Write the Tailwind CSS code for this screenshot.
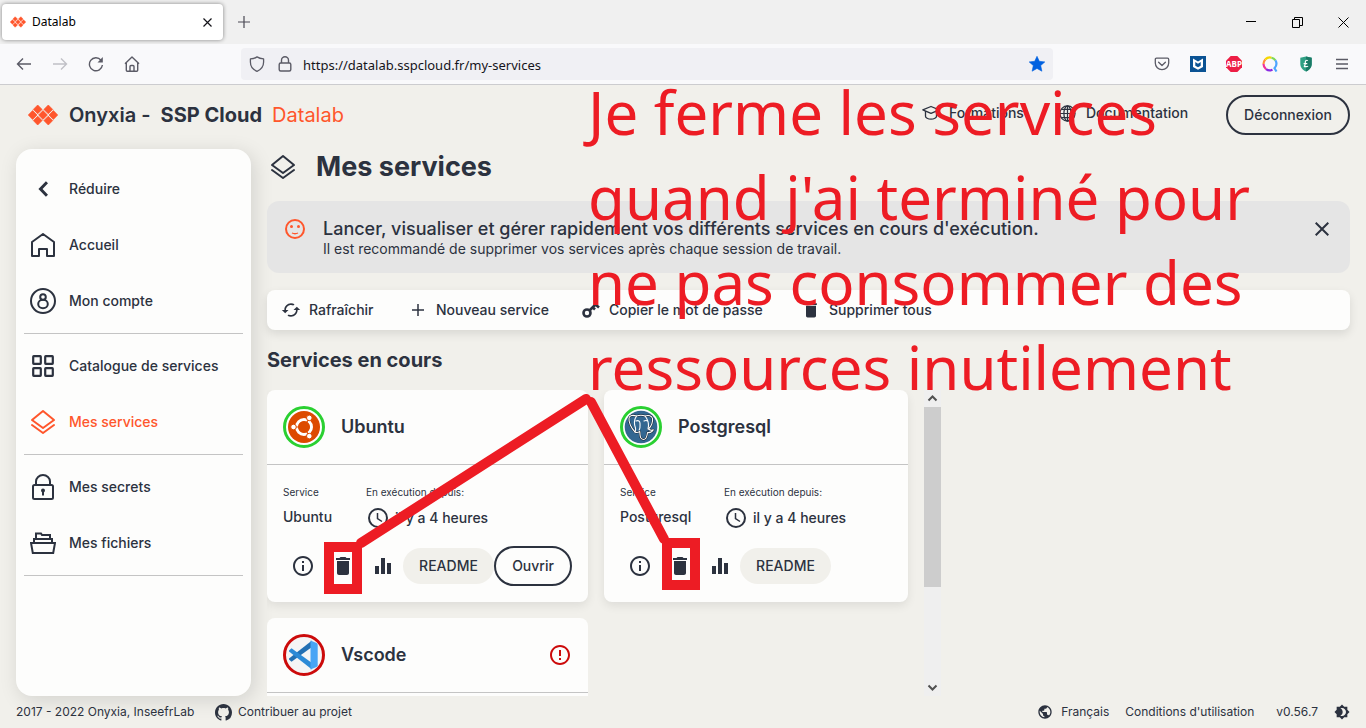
<!DOCTYPE html>
<html lang="fr">
<head>
<meta charset="utf-8">
<title>Datalab</title>
<script src="https://cdn.jsdelivr.net/npm/@tailwindcss/browser@4"></script>
</head>
<body class="relative flex h-screen flex-col overflow-hidden bg-[#f1f0eb] font-['Inter','Liberation_Sans',sans-serif] text-sm text-[#2c323f]">

<svg class="hidden" aria-hidden="true">
  <symbol id="onyxia" viewBox="0 0 30 20"><g fill="#ff562c" stroke="#ff562c" stroke-width="0.7" stroke-linejoin="round"><path d="M9.700 0l4.400 4.400-4.400 4.400-4.400-4.400zM20.300 0l4.400 4.400-4.400 4.400-4.400-4.400zM4.600 5.600L9 10l-4.400 4.400L.3 10zM15 5.600l4.400 4.400-4.400 4.400-4.400-4.400zM25.400 5.600l4.300 4.400-4.300 4.400L21 10zM9.700 11.200l4.400 4.400L9.700 20l-4.400-4.400zM20.300 11.200l4.400 4.400-4.400 4.400-4.400-4.400z"/></g></symbol>
  <symbol id="layers" viewBox="0 0 26 26"><g fill="none" stroke="currentColor" stroke-width="2" stroke-linejoin="round" stroke-linecap="round"><path d="M13 2l11 9-11 8L2 11z"/><path d="M2 16l11 8 11-8"/></g></symbol>
  <symbol id="info" viewBox="0 0 24 24"><path fill="currentColor" d="M11 7h2v2h-2zm0 4h2v6h-2zm1-9C6.480 2 2 6.480 2 12s4.480 10 10 10 10-4.480 10-10S17.520 2 12 2zm0 18c-4.410 0-8-3.590-8-8s3.590-8 8-8 8 3.590 8 8-3.590 8-8 8z"/></symbol>
  <symbol id="error" viewBox="0 0 24 24"><path fill="currentColor" d="M11 15h2v2h-2zm0-8h2v6h-2zm1-5C6.480 2 2 6.480 2 12s4.480 10 10 10 10-4.480 10-10S17.520 2 12 2zm0 18c-4.410 0-8-3.590-8-8s3.590-8 8-8 8 3.590 8 8-3.590 8-8 8z"/></symbol>
  <symbol id="trash" viewBox="0 0 24 24"><path fill="currentColor" d="M6 19c0 1.100.9 2 2 2h8c1.100 0 2-.9 2-2V7H6v12zM19 4h-3.500l-1-1h-5l-1 1H5v2h14V4z"/></symbol>
  <symbol id="chart" viewBox="0 0 24 24"><path fill="currentColor" d="M10 20h4V4h-4v16zm-6 0h4v-8H4v8zM16 9v11h4V9h-4z"/></symbol>
  <symbol id="clock" viewBox="0 0 24 24"><g fill="none" stroke="currentColor" stroke-width="2"><circle cx="12" cy="12" r="9"/><path d="M11.500 7v5.500l4.500 3" stroke-width="1.500"/></g></symbol>
</svg>

<!-- Browser tab strip -->
<div class="flex h-11 shrink-0 items-center bg-[#f0f0f0] font-['Noto_Sans',sans-serif] text-xs text-black">
  <div class="ml-[2px] flex h-9 w-[221px] items-center rounded bg-white pr-2 pl-2 shadow-[0_0_4px_rgba(0,0,0,0.45)]">
    <svg class="h-4 w-4"><use href="#onyxia"/></svg>
    <span class="ml-[6px] flex-1">Datalab</span>
    <button aria-label="Fermer l'onglet" class="grid h-4 w-4 place-items-center"><svg class="h-[9px] w-[9px]" viewBox="0 0 9 9" stroke="#15141a" stroke-width="1.200"><path d="M.5.5l8 8M8.500.5l-8 8"/></svg></button>
  </div>
  <button aria-label="Nouvel onglet" class="ml-[13px] grid h-4 w-4 place-items-center"><svg class="h-3 w-3" viewBox="0 0 12 12" stroke="#4a4954" stroke-width="1.200"><path d="M6 0v12M0 6h12"/></svg></button>
  <div class="ml-auto flex">
    <button aria-label="Réduire" class="grid h-8 w-[46px] place-items-center"><svg class="h-[10px] w-[10px]" viewBox="0 0 10 10" stroke="#000"><path d="M0 4.500h10"/></svg></button>
    <button aria-label="Restaurer" class="grid h-8 w-[46px] place-items-center"><svg class="h-[11px] w-[11px]" viewBox="0 0 11 11" fill="none" stroke="#000"><path d="M.5 2.500h7v8h-7zM2.500 2.500v-2h8v8h-3"/></svg></button>
    <button aria-label="Fermer" class="grid h-8 w-[46px] place-items-center"><svg class="h-[11px] w-[11px]" viewBox="0 0 11 11" stroke="#000"><path d="M.5.5l10 10M10.500.5l-10 10"/></svg></button>
  </div>
</div>

<!-- Browser toolbar -->
<div class="flex h-[41px] shrink-0 items-center border-b border-[#cccccf] bg-[#f9f9fb] px-2 font-['Noto_Sans',sans-serif] text-[13px] text-[#15141a]">
  <div class="flex gap-1 text-[#5b5b66]">
    <button aria-label="Précédent" class="grid h-8 w-8 place-items-center"><svg class="h-4 w-4" viewBox="0 0 16 16" fill="none" stroke="currentColor" stroke-width="1.400"><path d="M15 8H1.500M7 2.500L1.500 8 7 13.500"/></svg></button>
    <button aria-label="Suivant" class="grid h-8 w-8 place-items-center text-[#c0c0c6]"><svg class="h-4 w-4" viewBox="0 0 16 16" fill="none" stroke="currentColor" stroke-width="1.400"><path d="M1 8h13.500M9 2.500L14.500 8 9 13.500"/></svg></button>
    <button aria-label="Actualiser" class="grid h-8 w-8 place-items-center"><svg class="h-4 w-4" viewBox="0 0 16 16" fill="none" stroke="currentColor" stroke-width="1.400"><path d="M13 4.200A6.500 6.500 0 1 0 14.400 9"/><path d="M14.800 1v5.500H9.500z" fill="currentColor" stroke="none"/></svg></button>
    <button aria-label="Accueil" class="grid h-8 w-8 place-items-center"><svg class="h-4 w-4" viewBox="0 0 16 16" fill="none" stroke="currentColor" stroke-width="1.400" stroke-linejoin="round"><path d="M1 7.800L8 1l7 6.800M2.300 7v7.200c0 .6.400 1 1 1h9.400c.6 0 1-.4 1-1V7M6 15v-4.500c0-.6.400-1 1-1h2c.6 0 1 .4 1 1V15"/></svg></button>
  </div>
  <div class="mx-[93px] flex h-8 flex-1 items-center rounded bg-[#f0f0f4] px-2 text-[#5b5b66]">
    <svg class="h-4 w-4" viewBox="0 0 16 16" fill="none" stroke="currentColor" stroke-width="1.300" stroke-linejoin="round"><path d="M8 .9c2 1.400 4.200 1.900 6.600 2v3.200c0 4.300-2.600 7.600-6.600 9.200-4-1.600-6.600-4.900-6.600-9.200V2.900C3.800 2.800 6 2.300 8 .9z"/></svg>
    <svg class="ml-3 h-4 w-4" viewBox="0 0 16 16" fill="none" stroke="currentColor" stroke-width="1.400"><rect x="2.200" y="7" width="11.600" height="8" rx="1.500"/><path d="M4.500 7V4.300a3.500 3.500 0 0 1 7 0V7"/></svg>
    <input aria-label="Adresse" class="ml-[10px] min-w-0 flex-1 bg-transparent pt-[2px] text-[#15141a] outline-none" value="https://datalab.sspcloud.fr/my-services">
    <button aria-label="Marque-page"><svg class="h-4 w-4" viewBox="0 0 16 16" fill="#0061e0"><path d="M8 .3l2.300 5 5.500.6-4.100 3.700 1.200 5.600L8 12.400l-4.900 2.800 1.200-5.600L.2 5.900l5.500-.6z" stroke="#0061e0" stroke-width=".6" stroke-linejoin="round"/></svg></button>
  </div>
  <div class="flex gap-1 text-[#5b5b66]">
    <button aria-label="Pocket" class="grid h-8 w-8 place-items-center"><svg class="h-4 w-4" viewBox="0 0 16 16" fill="none" stroke="currentColor" stroke-width="1.300"><path d="M2.500 2.200h11c.7 0 1.200.5 1.200 1.200V7A6.700 6.700 0 0 1 1.300 7V3.400c0-.7.500-1.200 1.200-1.200z"/><path d="M4.600 6.300L8 9.500l3.400-3.200" stroke-linecap="round" stroke-linejoin="round"/></svg></button>
    <button aria-label="McAfee" class="grid h-8 w-8 place-items-center"><svg class="h-4 w-4" viewBox="0 0 16 16"><path fill="#0b5394" d="M0 0h16v16H0z"/><path fill="#fff" d="M3 2.500l5 3 5-3V11l-5 2.800L3 11z"/><path fill="#0b5394" d="M5.300 6l2.700 1.700L10.700 6v3.700L8 11.300 5.300 9.700z"/></svg></button>
    <button aria-label="Adblock Plus" class="grid h-8 w-8 place-items-center"><svg class="h-4 w-4" viewBox="0 0 16 16"><path fill="#ed1e45" d="M4.700 0h6.600L16 4.700v6.600L11.300 16H4.700L0 11.300V4.700z"/><text x="8" y="11" text-anchor="middle" font-family="Open Sans" font-weight="700" font-size="8" fill="#fff">ABP</text></svg></button>
    <button aria-label="Qwant" class="grid h-8 w-8 place-items-center"><svg class="h-4 w-4" viewBox="0 0 16 16" fill="none" stroke-width="2.200"><path d="M1.500 8a6.500 6.500 0 0 1 1.800-4.600" stroke="#ff8a3d"/><path d="M3.300 3.400a6.500 6.500 0 0 1 6.200-1.700" stroke="#f5d800"/><path d="M9.500 1.700a6.500 6.500 0 0 1 3.900 2.600" stroke="#7ed957"/><path d="M13.400 4.300c1.500 2.500 1.300 5.500-.9 7.900l2 3.300" stroke="#4da6ff"/><path d="M10.500 13.800a6.500 6.500 0 0 1-6.500-.7" stroke="#8a2be2"/><path d="M4 13.100A6.500 6.500 0 0 1 1.500 8" stroke="#f0309b"/></svg></button>
    <button aria-label="Protection" class="grid h-8 w-8 place-items-center"><svg class="h-4 w-4" viewBox="0 0 16 16"><path fill="#2fa084" d="M8 .6l5.700 1.200V8c0 3.600-2.500 6-5.700 7.500C4.800 14 2.300 11.600 2.300 8V1.800z"/><path fill="#1b7a66" d="M8 .6l5.700 1.200V8c0 3.600-2.500 6-5.700 7.500z"/><path d="M9.800 4.700C8.800 3.700 7.400 4.500 7.300 6c0 2 .2 3.500-1.300 4.700 1.500-.4 2.600.6 4.100-.6M5.600 7.700h3.700" fill="none" stroke="#fff" stroke-width="1.200"/></svg></button>
    <button aria-label="Menu" class="grid h-8 w-8 place-items-center"><svg class="h-4 w-4" viewBox="0 0 16 16" stroke="currentColor" stroke-width="1.300"><path d="M2 3.500h12M2 8h12M2 12.500h12"/></svg></button>
  </div>
</div>

<!-- Application header -->
<header class="mb-1 flex h-[60px] shrink-0 items-center px-4">
  <a href="#" class="flex items-center text-xl">
    <svg class="mr-[11px] ml-3 h-5 w-[30px] overflow-visible"><use href="#onyxia"/></svg>
    <span class="font-semibold">Onyxia - &nbsp;<b class="font-bold">SSP Cloud</b>&nbsp; <span class="font-normal text-[#ff562c]">Datalab</span></span>
  </a>
  <nav class="ml-auto flex items-center font-medium">
    <a href="#" class="mb-1 flex items-center gap-[9px]"><svg class="h-[18px] w-[18px]" viewBox="0 0 18 18" fill="none" stroke="currentColor" stroke-width="1.300" stroke-linejoin="round"><path d="M9 2.500l8.200 3.300L9 9.300.8 5.800z"/><path d="M3.500 7v5.200c0 1.500 2.500 3 5.500 3s5.500-1.500 5.500-3V7M17 6v5"/></svg><span class="min-w-[78px]">Formations</span></a>
    <a href="#" class="mb-1 ml-8 flex items-center gap-[10px]"><svg class="h-[17px] w-[17px]" viewBox="0 0 18 18" fill="none" stroke="currentColor" stroke-width="1.300"><circle cx="9" cy="9" r="8"/><ellipse cx="9" cy="9" rx="3.800" ry="8"/><path d="M1 9h16M2.500 4.700h13M2.500 13.300h13M9 1v16"/></svg><span class="min-w-[106px]">Documentation</span></a>
    <button class="ml-[34px] h-10 w-[124px] rounded-full border-2 border-[#2c323f]">Déconnexion</button>
  </nav>
</header>

<div class="flex min-h-0 flex-1 gap-4 px-4">
  <!-- Sidebar -->
  <nav class="w-[235px] shrink-0 rounded-2xl bg-[#fdfdfc] pt-3 font-medium shadow-[3px_4px_20px_rgba(0,0,0,0.13)]">
    <a href="#" class="flex h-14 items-center"><span class="grid w-[53px] place-items-center"><svg class="h-4 w-[10px]" viewBox="0 0 10 16" fill="none" stroke="currentColor" stroke-width="3"><path d="M9 1.200L2.500 8 9 14.800"/></svg></span>Réduire</a>
    <a href="#" class="flex h-14 items-center"><span class="grid w-[53px] place-items-center"><svg class="h-6 w-6" viewBox="0 0 24 24" fill="none" stroke="currentColor" stroke-width="2" stroke-linejoin="round"><path d="M1 23V9l11-8 11 8v14h-7v-7H8v7z"/></svg></span>Accueil</a>
    <a href="#" class="flex h-14 items-center"><span class="grid w-[53px] place-items-center"><svg class="h-[26px] w-[26px]" viewBox="0 0 26 26" fill="none" stroke="currentColor" stroke-width="2"><circle cx="13" cy="13" r="12"/><ellipse cx="13" cy="16" rx="4.800" ry="4.200"/><circle cx="13" cy="9" r="2.800" fill="#fdfdfc"/></svg></span>Mon compte</a>
    <hr class="mx-2 my-1 border-[#c4c4c4]">
    <a href="#" class="flex h-14 items-center"><span class="grid w-[53px] place-items-center"><svg class="h-[22px] w-[22px]" viewBox="0 0 22 22" fill="none" stroke="currentColor" stroke-width="2.200"><rect x="1.200" y="1.200" width="7.600" height="7.600" rx="0.500"/><rect x="13.200" y="1.200" width="7.600" height="7.600" rx="0.500"/><rect x="1.200" y="13.200" width="7.600" height="7.600" rx="0.500"/><rect x="13.200" y="13.200" width="7.600" height="7.600" rx="0.500"/></svg></span>Catalogue de services</a>
    <a href="#" aria-current="page" class="flex h-14 items-center text-[#ff562c]"><span class="grid w-[53px] place-items-center"><svg class="h-[26px] w-[26px]"><use href="#layers"/></svg></span>Mes services</a>
    <hr class="mx-2 my-1 border-[#c4c4c4]">
    <a href="#" class="flex h-14 items-center"><span class="grid w-[53px] place-items-center"><svg class="h-[26px] w-[22px]" viewBox="0 0 22 26" fill="none" stroke="currentColor" stroke-width="2"><rect x="1" y="11" width="20" height="14" rx="1.500"/><path d="M4 11V7.500a7 6.500 0 0 1 14 0V11"/><circle cx="11" cy="16.500" r="2" fill="currentColor" stroke="none"/><path d="M11 17v4.500"/></svg></span>Mes secrets</a>
    <a href="#" class="flex h-14 items-center"><span class="grid w-[53px] place-items-center"><svg class="h-[22px] w-[26px]" viewBox="0 0 26 22" fill="none" stroke="currentColor" stroke-width="2"><path d="M1 11h24l-1.800 10H2.800zM4 11V7h18v4M6 7V1.500h5l1 1.500h8v4"/></svg></span>Mes fichiers</a>
    <hr class="mx-2 my-1 border-[#c4c4c4]">
  </nav>

  <main class="flex min-w-0 flex-1 flex-col">
    <h1 class="flex h-9 shrink-0 items-center text-[27px] font-bold"><svg class="mr-5 ml-[3px] h-[26px] w-[26px]"><use href="#layers"/></svg>Mes services</h1>

    <section class="mt-4 flex shrink-0 items-start rounded-xl bg-[#e5e5e5] p-4">
      <svg class="h-6 w-6 shrink-0 text-[#ff562c]" viewBox="0 0 24 24" fill="none" stroke="currentColor" stroke-width="2"><circle cx="12" cy="12" r="9"/><circle cx="8.500" cy="9.500" r="1.500" fill="currentColor" stroke="none"/><circle cx="15.500" cy="9.500" r="1.500" fill="currentColor" stroke="none"/><path d="M9 16c2 1 4 1 6 0" stroke-width="1.300"/></svg>
      <div class="ml-4 flex-1">
        <h2 class="text-lg leading-6 font-medium">Lancer, visualiser et gérer rapidement vos différents services en cours d'exécution.</h2>
        <p class="leading-4">Il est recommandé de supprimer vos services après chaque session de travail.</p>
      </div>
      <button aria-label="Fermer" class="grid h-6 w-6 place-items-center"><svg class="h-[14px] w-[14px]" viewBox="0 0 14 14" stroke="currentColor" stroke-width="2"><path d="M.7.7l12.600 12.600M13.300.7L.7 13.300"/></svg></button>
    </section>

    <div class="mt-[17px] flex h-10 shrink-0 items-center gap-8 rounded-lg bg-[#fdfdfc] px-[14px] font-medium shadow-[0_4px_10px_rgba(0,0,0,0.1)]">
      <button class="flex items-center gap-2"><svg class="h-5 w-5" viewBox="0 0 24 24" fill="currentColor"><path d="M19 8l-4 4h3c0 3.310-2.690 6-6 6-1.010 0-1.970-.25-2.800-.7l-1.460 1.460C8.970 19.540 10.430 20 12 20c4.420 0 8-3.580 8-8h3l-4-4zM6 12c0-3.310 2.690-6 6-6 1.010 0 1.970.25 2.800.7l1.460-1.460C15.030 4.460 13.570 4 12 4c-4.420 0-8 3.580-8 8H1l4 4 4-4H6z"/></svg><span class="min-w-[67px] text-left">Rafraîchir</span></button>
      <button class="flex items-center gap-2"><svg class="h-5 w-5" viewBox="0 0 20 20" stroke="currentColor" stroke-width="1.500"><path d="M10 4v12M4 10h12"/></svg>Nouveau service</button>
      <button class="flex items-center gap-2"><svg class="h-5 w-5" viewBox="0 0 20 20" fill="none" stroke="currentColor" stroke-width="2.600"><circle cx="6" cy="13" r="3.500"/><path d="M8.500 10.500l6-6 3.500 3M12 7.500l2 2"/></svg><span class="min-w-40 text-left">Copier le mot de passe</span></button>
      <button class="flex items-center gap-2"><svg class="h-5 w-5"><use href="#trash"/></svg>Supprimer tous</button>
    </div>

    <h2 class="flex h-[60px] shrink-0 items-center text-xl font-bold">Services en cours</h2>

    <div class="flex min-h-0 max-w-[674px] flex-1 overflow-hidden">
      <div class="grid flex-1 grid-cols-[321fr_304fr] content-start items-start gap-4">
        <article class="rounded-lg bg-[#fdfdfc] shadow-[0_4px_10px_rgba(0,0,0,0.08)]">
          <header class="flex items-center gap-4 border-b border-[#c4c4c4] p-4">
            <svg class="h-[42px] w-[42px]" viewBox="0 0 42 42"><circle cx="21" cy="21" r="19.500" fill="#fff" stroke="#2ad031" stroke-width="3"/><circle cx="21" cy="21" r="16" fill="#dd4a00"/><g fill="none" stroke="#fff" stroke-width="3"><circle cx="21" cy="21" r="7.500"/></g><g stroke="#dd4a00" stroke-width="1.200"><path d="M21 21H9M21 21l6-10.400M21 21l6 10.400"/></g><circle cx="21" cy="21" r="5.700" fill="#dd4a00"/><g fill="#fff" stroke="#dd4a00" stroke-width="1"><circle cx="10.500" cy="21" r="2.800"/><circle cx="26.300" cy="11.900" r="2.800"/><circle cx="26.300" cy="30.100" r="2.800"/></g></svg>
            <h3 class="text-lg font-semibold">Ubuntu</h3>
          </header>
          <div class="p-4">
            <div class="flex gap-8">
              <div class="min-w-[51px]"><p class="text-[10px] leading-[22px]">Service</p><p class="mt-[3px] leading-[22px] font-medium">Ubuntu</p></div>
              <div><p class="text-[10px] leading-[22px]">En exécution depuis:</p><p class="mt-[3px] flex h-6 items-center gap-[5px] font-medium"><svg class="h-6 w-6"><use href="#clock"/></svg>il y a 4 heures</p></div>
            </div>
            <div class="mt-4 flex items-center">
              <button aria-label="Informations" class="grid h-10 w-10 place-items-center"><svg class="h-6 w-6"><use href="#info"/></svg></button>
              <button aria-label="Supprimer" class="grid h-10 w-10 place-items-center"><svg class="h-6 w-6"><use href="#trash"/></svg></button>
              <button aria-label="Surveillance" class="grid h-10 w-10 place-items-center"><svg class="h-6 w-6"><use href="#chart"/></svg></button>
              <button class="h-9 w-[91px] rounded-full bg-[#f1f0eb] font-medium">README</button>
              <button class="h-10 w-[78px] rounded-full border-2 border-[#2c323f] font-medium">Ouvrir</button>
            </div>
          </div>
        </article>

        <article class="rounded-lg bg-[#fdfdfc] shadow-[0_4px_10px_rgba(0,0,0,0.08)]">
          <header class="flex items-center gap-4 border-b border-[#c4c4c4] p-4">
            <svg class="h-[42px] w-[42px]" viewBox="0 0 42 42"><circle cx="21" cy="21" r="19.500" fill="#fff" stroke="#2ad031" stroke-width="3"/><circle cx="21" cy="21" r="16.300" fill="#336791"/><g fill="#336791" stroke="#111c28" stroke-width="2" stroke-linejoin="round" stroke-linecap="round"><path d="M15 26c-4-4-6.500-10-6-14 .5-2.500 4-3.300 7.500-2 3-1 6-1 8.500 0 3.500-1.300 7-.2 7.500 2.500.4 3.500-1.500 8-4 10.500 1.500 1.500 3.500 1.300 4.800.8-1 2.200-3.500 3-5.800 2.700-.5 3-.5 7-4 7-3.200 0-3.500-3-3.700-8-1.300.8-3 1.500-4.800.5z"/></g><g fill="none" stroke="#fff" stroke-width="1.100" stroke-linejoin="round" stroke-linecap="round"><path d="M15 26c-4-4-6.500-10-6-14 .5-2.500 4-3.300 7.500-2 3-1 6-1 8.500 0 3.500-1.300 7-.2 7.500 2.500.4 3.500-1.500 8-4 10.500 1.500 1.500 3.500 1.300 4.800.8-1 2.200-3.500 3-5.800 2.700-.5 3-.5 7-4 7-3.200 0-3.500-3-3.700-8-1.300.8-3 1.500-4.800.5z"/><path d="M16.500 10c-2 3-2.500 8-1 12 .5 1.500 0 2.500-.5 4M25 10c2.500 3 3.500 6 3.500 9.500 0 1.500-.5 2.500-.5 3.500M16 15c2.500-1 4 0 4 2.500s.5 4-.8 6.500M24 15c1.500-.7 3-.5 4 .3"/></g></svg>
            <h3 class="text-lg font-semibold">Postgresql</h3>
          </header>
          <div class="p-4">
            <div class="flex gap-8">
              <div class="min-w-[72px]"><p class="text-[10px] leading-[22px]">Service</p><p class="mt-[3px] leading-[22px] font-medium">Postgresql</p></div>
              <div><p class="text-[10px] leading-[22px]">En exécution depuis:</p><p class="mt-[3px] flex h-6 items-center gap-[5px] font-medium"><svg class="h-6 w-6"><use href="#clock"/></svg>il y a 4 heures</p></div>
            </div>
            <div class="mt-4 flex h-10 items-center">
              <button aria-label="Informations" class="grid h-10 w-10 place-items-center"><svg class="h-6 w-6"><use href="#info"/></svg></button>
              <button aria-label="Supprimer" class="grid h-10 w-10 place-items-center"><svg class="h-6 w-6"><use href="#trash"/></svg></button>
              <button aria-label="Surveillance" class="grid h-10 w-10 place-items-center"><svg class="h-6 w-6"><use href="#chart"/></svg></button>
              <button class="h-9 w-[91px] rounded-full bg-[#f1f0eb] font-medium">README</button>
            </div>
          </div>
        </article>

        <article class="h-[212px] rounded-lg bg-[#fdfdfc]">
          <header class="flex items-center gap-4 border-b border-[#c4c4c4] p-4">
            <svg class="h-[42px] w-[42px]" viewBox="0 0 42 42"><circle cx="21" cy="21" r="19.500" fill="#f5f5f5" stroke="#cc0b0b" stroke-width="3"/><path fill="#2370b3" d="M6 25.500l2.500 2.300L29 13V6.500L6 24.500z"/><path fill="#2c8ad6" d="M6 16.500l2.500-2.200L29 29v6.500L6 17.500z"/><path fill="#48a5f5" d="M27.500 6.500l6 2.500c.8.400 1.200 1 1.200 1.800v20.400c0 .8-.4 1.400-1.200 1.800l-6 2.500z"/></svg>
            <h3 class="flex-1 text-lg font-semibold">Vscode</h3>
            <svg class="h-6 w-6 text-[#cc0b0b]"><use href="#error"/></svg>
          </header>
        </article>
      </div>
      <!-- Scrollbar of the service list -->
      <div class="ml-4 flex w-[17px] flex-col bg-[#efefef]">
        <svg class="h-[17px] w-[17px]" viewBox="0 0 17 17" fill="none" stroke="#505050" stroke-width="2"><path d="M4.500 10.500l4-4 4 4"/></svg>
        <div class="flex-1"><div class="h-[66%] bg-[#cdcdcd]"></div></div>
        <svg class="h-[17px] w-[17px]" viewBox="0 0 17 17" fill="none" stroke="#505050" stroke-width="2"><path d="M4.500 6.500l4 4 4-4"/></svg>
      </div>
    </div>
  </main>
</div>

<!-- Footer -->
<footer class="flex h-8 shrink-0 items-center px-4 text-xs">
  <span class="min-w-[181px]">2017 - 2022 Onyxia, InseefrLab</span>
  <a href="#" class="ml-[18px] flex items-center gap-[6px]"><svg class="h-[17px] w-[17px]" viewBox="0 0 16 16" fill="currentColor"><path d="M8 0C3.580 0 0 3.580 0 8c0 3.540 2.290 6.530 5.470 7.590.4.070.55-.17.55-.38 0-.19-.010-.82-.010-1.490-2.010.37-2.530-.49-2.690-.94-.090-.23-.48-.94-.82-1.130-.28-.15-.68-.52-.010-.53.63-.010 1.080.58 1.230.82.72 1.210 1.870.87 2.330.66.070-.52.28-.87.51-1.070-1.780-.2-3.640-.89-3.640-3.950 0-.87.31-1.590.82-2.150-.080-.2-.36-1.020.080-2.120 0 0 .67-.21 2.200.82.64-.18 1.320-.27 2-.27s1.360.090 2 .27c1.530-1.040 2.200-.82 2.200-.82.44 1.100.16 1.920.080 2.120.51.56.82 1.270.82 2.150 0 3.070-1.870 3.750-3.650 3.950.29.25.54.73.54 1.480 0 1.070-.010 1.930-.010 2.200 0 .21.15.46.55.38A8.010 8.010 0 0 0 16 8c0-4.420-3.580-8-8-8z"/></svg>Contribuer au projet</a>
  <div class="ml-auto flex items-center gap-4">
    <button class="flex items-center gap-2"><svg class="h-4 w-4" viewBox="0 0 24 24" fill="currentColor"><path d="M12 2C6.480 2 2 6.480 2 12s4.480 10 10 10 10-4.480 10-10S17.520 2 12 2zm-1 17.930c-3.950-.49-7-3.850-7-7.930 0-.62.080-1.210.21-1.790L9 15v1c0 1.100.9 2 2 2v1.930zm6.900-2.540c-.26-.81-1-1.390-1.900-1.390h-1v-3c0-.55-.45-1-1-1H8v-2h2c.55 0 1-.45 1-1V7h2c1.100 0 2-.9 2-2v-.41c2.930 1.190 5 4.060 5 7.410 0 2.080-.8 3.970-2.100 5.390z"/></svg>Français</button>
    <a href="#" class="min-w-[135px]">Conditions d'utilisation</a>
    <span>v0.56.7</span>
    <button aria-label="Mode sombre"><svg class="h-4 w-4" viewBox="0 0 24 24" fill="currentColor"><path d="M20 8.690V4h-4.690L12 .69 8.690 4H4v4.690L.69 12 4 15.310V20h4.690L12 23.310 15.310 20H20v-4.690L23.310 12 20 8.690zM12 18c-.89 0-1.740-.2-2.500-.55C11.560 16.500 13 14.420 13 12s-1.440-4.500-3.500-5.450C10.260 6.200 11.110 6 12 6c3.310 0 6 2.690 6 6s-2.690 6-6 6z"/></svg></button>
  </div>
</footer>

<!-- Tutorial annotation drawn over the page -->
<svg class="pointer-events-none absolute top-0 left-0 h-[728px] w-[1366px]" viewBox="0 0 1366 728" fill="none" stroke="#ed1c24" stroke-width="10" stroke-linecap="round"><path d="M361 543L586 399"/><path d="M591 402L664 539"/><path stroke-linecap="butt" d="M329 547h28v42h-28zM667 543h28v42h-28z"/></svg>
<p class="pointer-events-none absolute top-[70px] left-[588px] font-['Noto_Sans',sans-serif] text-[60px] leading-[85px] whitespace-nowrap text-[#ed1c24]">Je ferme les services<br>quand j'ai terminé pour<br>ne pas consommer des<br>ressources inutilement</p>
</body>
</html>
